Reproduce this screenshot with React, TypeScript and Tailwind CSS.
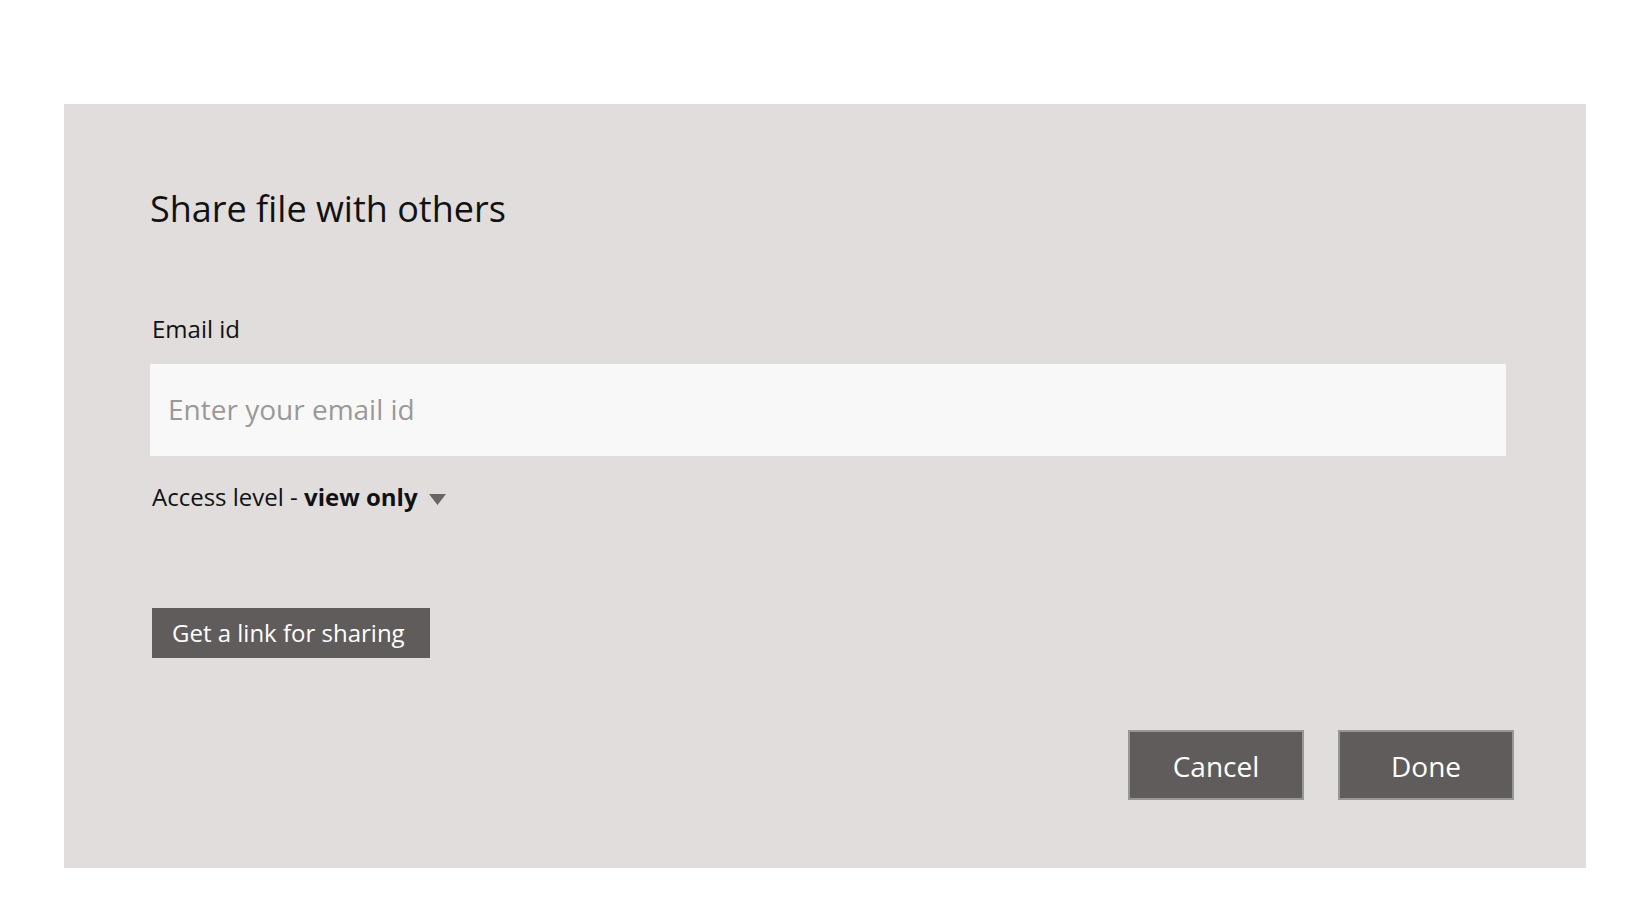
export default function App() {
  return (
    <div className="min-h-screen bg-white pt-[104px] pl-16" style={{ fontFamily: '"Open Sans", "Liberation Sans", sans-serif' }}>
      <div className="w-[1522px] h-[764px] bg-[#e0dddc] pl-[86px] pr-[72px] pt-[81px] flex flex-col">
        <h1 className="text-[36px] leading-[48px] text-[#111111] font-normal">Share file with others</h1>

        <label className="mt-[80px] text-[24px] leading-[32px] text-[#111111] pl-[2px]">Email id</label>
        <div className="mt-[19px] w-[1356px] h-[92px] bg-[#f8f8f8] flex items-center pl-[18px] pb-[2px]">
          <input
            type="text"
            placeholder="Enter your email id"
            className="w-full bg-transparent outline-none text-[28px] leading-[40px] text-[#333333] placeholder:text-[#9b9898]"
          />
        </div>

        <div className="mt-[25px] flex items-center text-[24px] leading-[32px] text-[#111111] pl-[2px]">
          <span>Access level - <b className="font-bold">view only</b></span>
          <svg className="ml-[11px] mt-[5px]" width="17" height="11" viewBox="0 0 17 11">
            <path d="M0 0 H17 L8.5 11 Z" fill="#6a6565" />
          </svg>
        </div>

        <div className="mt-[95px] pl-[2px]">
          <button className="w-[278px] h-[50px] bg-[#615c5c] text-white text-[24px] leading-[32px] text-left pl-[20px]">
            Get a link for sharing
          </button>
        </div>

        <div className="mt-[72px] flex justify-end gap-[34px]">
          <button className="w-[176px] h-[70px] bg-[#615c5c] border-2 border-[#979797] text-white text-[28px] pt-[1px]">Cancel</button>
          <button className="w-[176px] h-[70px] bg-[#615c5c] border-2 border-[#979797] text-white text-[28px] pt-[1px]">Done</button>
        </div>
      </div>
    </div>
  );
}
